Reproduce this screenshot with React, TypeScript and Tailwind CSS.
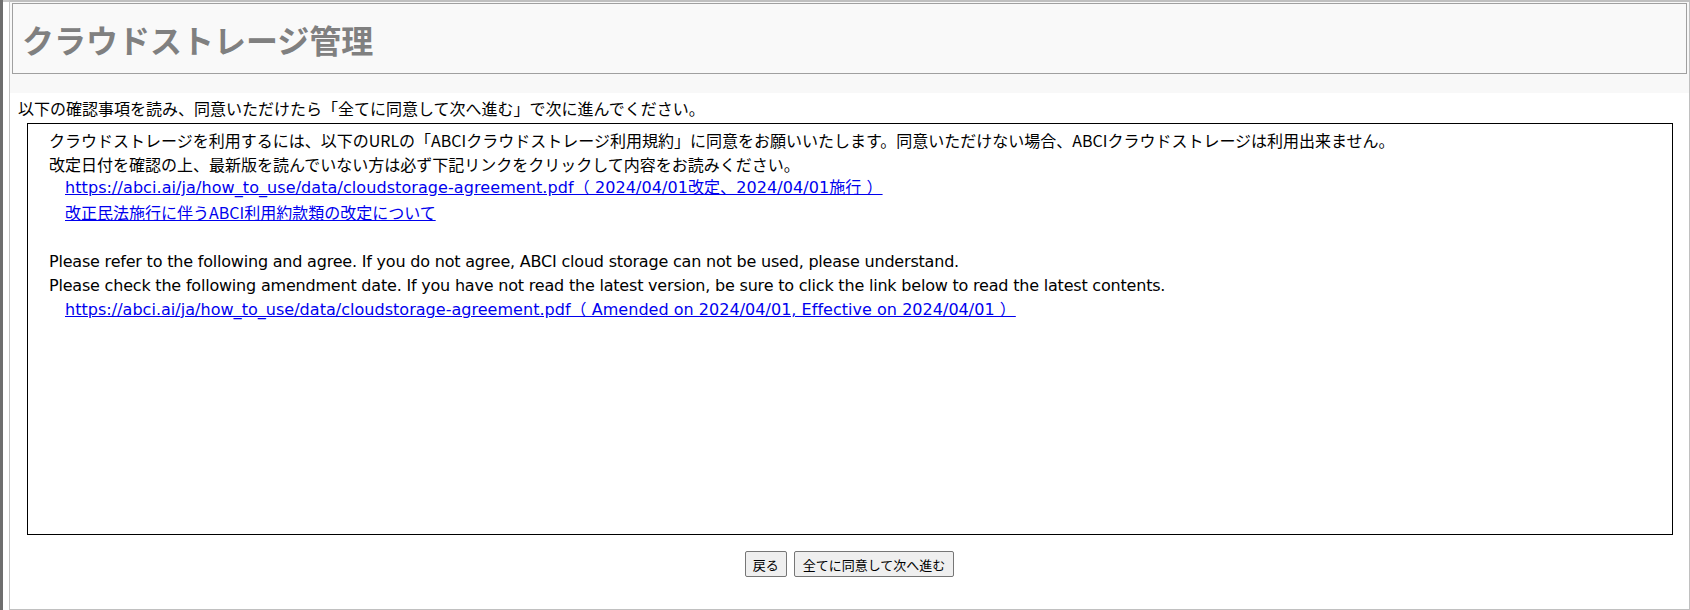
const latin = { fontFamily: '"DejaVu Sans", "Noto Sans CJK JP", sans-serif' };
const jp = { fontFamily: '"Noto Sans CJK JP", sans-serif' };

export default function App() {
  return (
    <div className="flex h-[610px] w-[1690px] bg-white text-black" style={latin}>
      <div className="w-[3px] bg-[#6e6e6e]" />
      <div className="w-[6px] border-t-2 border-[#c8c8c8] bg-white" />
      <div className="flex flex-1 flex-col border-x border-b border-t-2 border-[#c0c0c0] border-l-[#c4c4c4]">
        <div className="bg-[#f8f8f8] px-[2px] pb-[19px] pt-px">
          <div className="flex h-[71px] items-center border border-[#a0a0a0] bg-[#f9f9f9] pl-[9px]">
            <h1 className="text-[32px] font-bold text-[#808080]" style={jp}>
              クラウドストレージ管理
            </h1>
          </div>
        </div>

        <p className="mt-[4px] pl-[8px] text-[16px] leading-[22px]" style={jp}>
          以下の確認事項を読み、同意いただけたら「全てに同意して次へ進む」で次に進んでください。
        </p>

        <div className="ml-[17px] mr-[16px] mt-[4px] h-[412px] border border-black pl-[21px] pt-[4px] text-[16px] leading-[24px]">
          <p style={jp}>
            クラウドストレージを利用するには、以下のURLの「ABCIクラウドストレージ利用規約」に同意をお願いいたします。同意いただけない場合、ABCIクラウドストレージは利用出来ません。
          </p>
          <p style={jp}>改定日付を確認の上、最新版を読んでいない方は必ず下記リンクをクリックして内容をお読みください。</p>
          <div className="pl-[16px] tracking-[0.08px]">
            <a href="#" className="text-[#0000ee] underline">
              https://abci.ai/ja/how_to_use/data/cloudstorage-agreement.pdf（ 2024/04/01改定、2024/04/01施行 ）
            </a>
          </div>
          <div className="pl-[16px]">
            <a href="#" className="text-[#0000ee] underline" style={jp}>
              改正民法施行に伴うABCI利用約款類の改定について
            </a>
          </div>
          <div className="h-[24px]" />
          <p className="tracking-[-0.2px]">
            Please refer to the following and agree. If you do not agree, ABCI cloud storage can not be used, please understand.
          </p>
          <p className="tracking-[-0.2px]">
            Please check the following amendment date. If you have not read the latest version, be sure to click the link below to read the latest contents.
          </p>
          <div className="pl-[16px] tracking-[0.03px]">
            <a href="#" className="text-[#0000ee] underline">
              https://abci.ai/ja/how_to_use/data/cloudstorage-agreement.pdf（ Amended on 2024/04/01, Effective on 2024/04/01 ）
            </a>
          </div>
        </div>

        <div className="mt-[16px] flex justify-center gap-[7px]">
          <button
            className="h-[26px] rounded-[2px] border border-[#767676] bg-[#efefef] px-[7px] text-[13px] leading-none"
            style={jp}
          >
            戻る
          </button>
          <button
            className="h-[26px] rounded-[2px] border border-[#767676] bg-[#efefef] px-[8px] text-[13px] leading-none"
            style={jp}
          >
            全てに同意して次へ進む
          </button>
        </div>
      </div>
    </div>
  );
}
